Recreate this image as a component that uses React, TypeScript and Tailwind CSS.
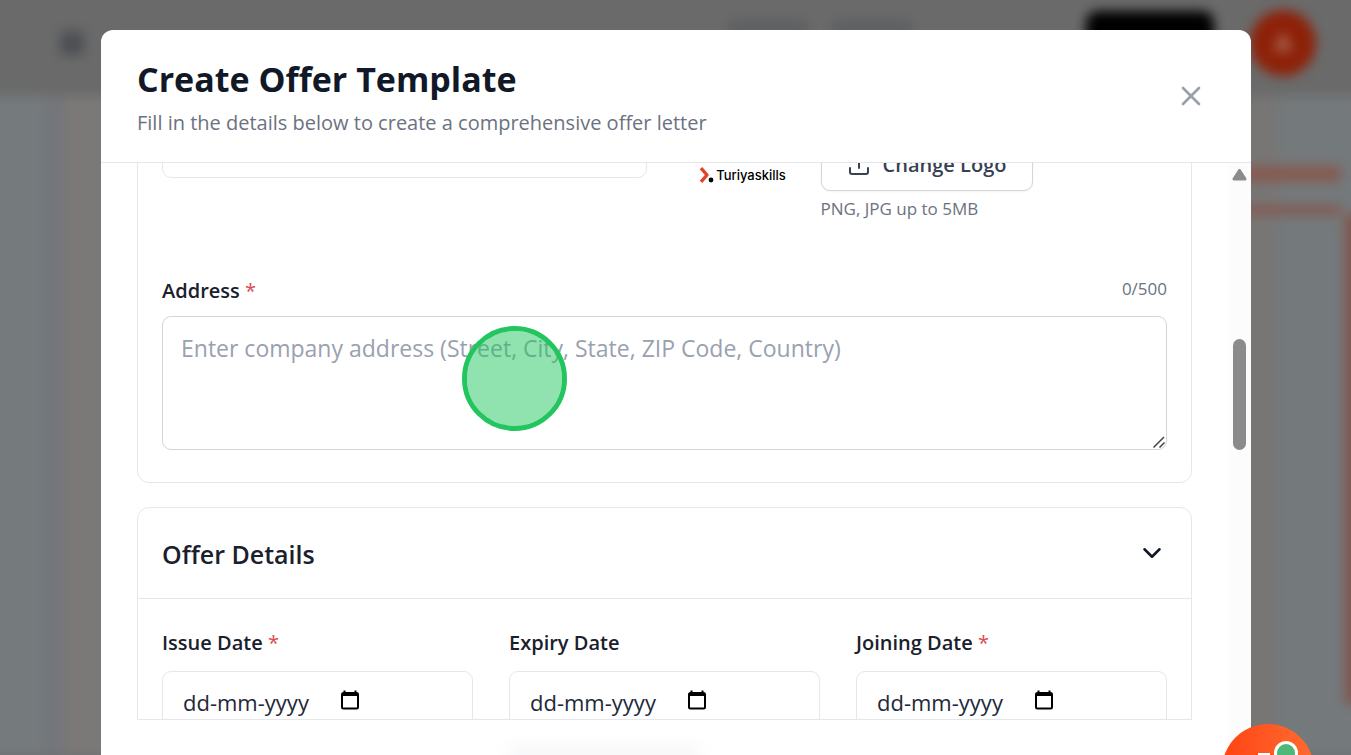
import React from 'react';
import { ChevronDown, Upload, X } from 'lucide-react';

const dateFields = [
  { id: 'issue-date', label: 'Issue Date', required: true },
  { id: 'expiry-date', label: 'Expiry Date', required: false },
  { id: 'joining-date', label: 'Joining Date', required: true },
];

const Required: React.FC = () => <span className="font-normal text-[#dc4a4a]">*</span>;

const CalendarIcon: React.FC = () => (
  <svg width="18" height="20" viewBox="0 0 18 20" fill="none" aria-hidden="true">
    <path d="M3.5 0.5v2M14.5 0.5v2" stroke="black" strokeWidth="2" />
    <rect x="1" y="3" width="16" height="15.5" rx="1.5" stroke="black" strokeWidth="2" />
    <path d="M1 3h16v3H1z" fill="black" />
  </svg>
);

const DateField: React.FC<{ id: string; label: string; required: boolean }> = ({ id, label, required }) => (
  <div>
    <label htmlFor={id} className="block text-[20px] leading-8 font-semibold text-[#1a202c]">
      {label} {required && <Required />}
    </label>
    <div className="mt-3 flex h-[62px] items-center rounded-[9px] border border-gray-200 bg-white px-5">
      <input
        id={id}
        type="text"
        placeholder="dd-mm-yyyy"
        className="w-[158px] bg-transparent text-[22px] leading-8 outline-none placeholder:text-gray-800"
      />
      <button type="button" aria-label={`Pick ${label}`} className="pb-1">
        <CalendarIcon />
      </button>
    </div>
  </div>
);

/* Page that sits behind the dialog */
const PageBehind: React.FC = () => (
  <div className="absolute inset-0 flex flex-col bg-[#747779] blur-[6px]" aria-hidden="true">
    <div className="-mx-4 -mt-4 flex h-28 shrink-0 items-center bg-[#6a6a6a] pt-1.5 pr-[51px] pl-[76px]">
      <div className="h-6 w-6 rounded bg-[#4c4f53]" />
      <div className="ml-auto flex items-center">
        <div className="mr-6 mb-8 h-3 w-20 bg-[#5b5d60]" />
        <div className="mr-[174px] mb-8 h-3 w-20 bg-[#5b5d60]" />
        <div className="mr-9 h-16 w-[128px] rounded-xl bg-black" />
        <div className="flex h-[66px] w-[66px] items-center justify-center rounded-full bg-[#8e2108] text-2xl font-bold text-[#b08070]">A</div>
      </div>
    </div>
    <div className="-mx-4 flex flex-1">
      <div className="w-[60px] bg-[#757a7d]" />
      <div className="w-5 bg-[#73767b]" />
      <div className="w-10 bg-[#7b7978]" />
      <div className="flex-1 bg-[#777777]" />
      <div className="w-[30px] bg-[#777675]" />
      <div className="w-[88px] bg-[#74797b] pt-[70px]">
        <div className="-ml-9 h-4 w-[98px] rounded bg-[#855a50]" />
        <div className="mt-6 -ml-9 h-2 w-[98px] bg-[#85544a]" />
        <div className="ml-[66px] h-[490px] w-10 bg-[#80554c]" />
      </div>
    </div>
  </div>
);

const ScrollTrack: React.FC = () => (
  <div className="flex w-[23px] shrink-0 flex-col items-center bg-[#fcfcfc] pt-1.5">
    <svg width="15" height="12" viewBox="0 0 15 12" fill="#8b8b8b" aria-hidden="true">
      <path d="M6.2 0.8a1.6 1.6 0 0 1 2.6 0l5.5 8.4a1.5 1.5 0 0 1-1.3 2.3H2a1.5 1.5 0 0 1-1.3-2.3z" />
    </svg>
    <div className="mt-[158px] h-[111px] w-[13px] rounded-full bg-[#8b8b8b]" />
  </div>
);

const LogoMark: React.FC = () => (
  <div className="flex w-[120px] items-center justify-center gap-0.5">
    <svg width="15" height="16" viewBox="0 0 15 16" fill="none" aria-hidden="true">
      <path d="M2 1.2 8 8l-6 6.8" stroke="#e0452c" strokeWidth="3.4" strokeLinejoin="round" />
      <circle cx="12" cy="13" r="2.4" fill="black" />
    </svg>
    <span className="font-['Inter'] text-[13px] leading-4 font-medium text-black">Turiyaskills</span>
  </div>
);

export default function App() {
  return (
    <div className="relative h-screen overflow-hidden bg-[#6f7172] font-['Open_Sans','Noto_Sans',sans-serif] text-[#111827]">
      <PageBehind />

      <div
        role="dialog"
        aria-labelledby="dialog-title"
        className="relative mx-[100px] mt-[30px] ml-[101px] flex h-full flex-col overflow-hidden rounded-t-xl bg-white"
      >
        {/* Dialog header */}
        <header className="flex h-[133px] shrink-0 items-center justify-between border-b border-gray-200 px-9">
          <div className="pt-1.5">
            <h1 id="dialog-title" className="text-[34px] leading-12 font-bold">Create Offer Template</h1>
            <p className="text-[20px] leading-10 text-[#6b7280]">
              Fill in the details below to create a comprehensive offer letter
            </p>
          </div>
          <button type="button" aria-label="Close" className="p-2 text-gray-400">
            <X size={32} strokeWidth={2} />
          </button>
        </header>

        <div className="flex min-h-0 flex-1">
          <div className="h-[592px] min-w-0 flex-1 overflow-hidden px-9">
            <div className="h-[556px] overflow-hidden">
              {/* Company details */}
              <section className="-mt-10 rounded-xl border border-gray-200 px-6 pb-8">
                <div className="grid grid-cols-2 gap-9">
                  <input type="text" aria-label="Company name" className="h-[54px] w-full rounded-[9px] border border-gray-200 px-5 outline-none" />
                  <div className="flex items-center gap-[18px]">
                    <div className="pt-0.5">
                      <LogoMark />
                    </div>
                    <div>
                      <button
                        type="button"
                        className="flex h-[67px] w-[212px] items-center justify-center gap-3 rounded-[9px] border border-gray-300 bg-white pt-[15px] text-[20px] leading-8 font-semibold text-gray-700 shadow-xs"
                      >
                        <Upload size={24} />
                        Change Logo
                      </button>
                      <p className="mt-1 text-[17px] leading-7 text-[#6b7280]">PNG, JPG up to 5MB</p>
                    </div>
                  </div>
                </div>

                <div className="mt-[52px] flex items-start justify-between">
                  <label htmlFor="address" className="text-[20px] leading-8 font-semibold text-[#1a202c]">
                    Address <Required />
                  </label>
                  <span className="text-[17px] leading-7 text-[#6b7280]">0/500</span>
                </div>
                <div className="relative mt-[9px]">
                  <textarea
                    id="address"
                    placeholder="Enter company address (Street, City, State, ZIP Code, Country)"
                    className="block h-[134px] w-full resize-none rounded-[9px] border border-gray-300 px-[18px] py-[13px] text-[23px] leading-9 outline-none placeholder:text-gray-400"
                  />
                  <svg className="absolute right-0.5 bottom-0.5" width="12" height="12" viewBox="0 0 12 12" aria-hidden="true">
                    <path d="M0.5 11.5 11 1M6.5 11.5 11.5 6.5" stroke="#444" strokeWidth="1.5" />
                  </svg>
                </div>
              </section>

              {/* Offer details */}
              <section className="mt-6 rounded-xl border border-gray-200">
                <button type="button" className="flex h-[91px] w-full items-center justify-between border-b border-gray-200 px-6">
                  <span className="pt-0.5 text-[25px] leading-9 font-semibold text-[#1a202c]">Offer Details</span>
                  <ChevronDown size={30} strokeWidth={2} />
                </button>
                <div className="grid grid-cols-3 gap-9 px-6 pt-7 pb-9">
                  {dateFields.map((field) => (
                    <DateField key={field.id} {...field} />
                  ))}
                </div>
              </section>
            </div>

            {/* Sticky action bar */}
            <footer className="flex h-16 items-end justify-between overflow-hidden border-t border-gray-200 bg-white pl-[372px]">
              <div className="mb-6 h-3 w-[190px] bg-gray-100 blur-sm" />
            </footer>
          </div>
          <ScrollTrack />
        </div>
      </div>

      {/* Click highlight */}
      <div className="pointer-events-none absolute top-[326px] left-[462px] flex h-[105px] w-[105px] rounded-full border-[5px] border-[#22c55e]">
        <div className="flex-1 rounded-full bg-[#22c55e]/50" />
      </div>

      {/* Chat bubble */}
      <button
        type="button"
        aria-label="Open chat"
        className="absolute right-[37px] bottom-[-61px] h-[92px] w-[92px] rounded-full bg-linear-to-r from-[#ff4310] to-[#ff6a30]"
      >
        <span className="absolute top-[29px] left-9 h-1 w-3 bg-white" />
        <span className="absolute top-[17px] left-[52px] h-6 w-6 rounded-full border-[3px] border-white bg-[#4db877]" />
      </button>
    </div>
  );
}
